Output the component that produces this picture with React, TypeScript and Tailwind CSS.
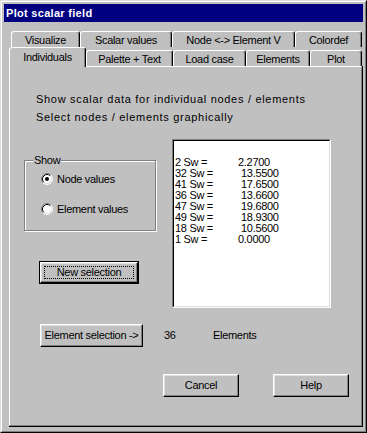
import React from "react";

const rows: [string, string][] = [
  ["2 Sw =", "2.2700"],
  ["32 Sw =", "13.5500"],
  ["41 Sw =", "17.6500"],
  ["36 Sw =", "13.6600"],
  ["47 Sw =", "19.6800"],
  ["49 Sw =", "18.9300"],
  ["18 Sw =", "10.5600"],
  ["1 Sw =", "0.0000"],
];

function Radio({ checked }: { checked?: boolean }) {
  return (
    <svg width="12" height="12" viewBox="0 0 12 12" className="shrink-0">
      <circle cx="6" cy="6" r="5" fill="#fff" />
      <path d="M2.11 9.89 A5.5 5.5 0 0 1 9.89 2.11" fill="none" stroke="#808080" />
      <path d="M9.89 2.11 A5.5 5.5 0 0 1 2.11 9.89" fill="none" stroke="#fff" />
      <path d="M2.82 9.18 A4.5 4.5 0 0 1 9.18 2.82" fill="none" stroke="#000" />
      <path d="M9.18 2.82 A4.5 4.5 0 0 1 2.82 9.18" fill="none" stroke="#dfdfdf" />
      {checked && <circle cx="6" cy="6" r="2" fill="#000" />}
    </svg>
  );
}

function Button({
  label,
  width,
  isDefault,
}: {
  label: string;
  width: string;
  isDefault?: boolean;
}) {
  if (isDefault) {
    return (
      <div className={`${width} h-[23px] border border-black`}>
        <div className="h-full border-t border-l border-white border-r border-b border-r-black border-b-black shadow-[inset_-1px_-1px_0_#808080,inset_1px_1px_0_#dfdfdf] flex items-center justify-center p-[3px]">
          <div className="w-full h-full border border-dotted border-black flex items-center justify-center">
            {label}
          </div>
        </div>
      </div>
    );
  }
  return (
    <div
      className={`${width} h-[23px] border-t border-l border-white border-r border-b border-r-black border-b-black shadow-[inset_-1px_-1px_0_#808080,inset_1px_1px_0_#dfdfdf] flex items-center justify-center`}
    >
      {label}
    </div>
  );
}

function Tab({ label, width, selected }: { label: string; width: string; selected?: boolean }) {
  return (
    <div
      className={`${width} ${
        selected ? "h-[20px] relative z-10 pb-[1px]" : "h-[16px] mt-[3px] pt-[2px]"
      } bg-[#c0c0c0] rounded-t-[3px] border-t border-l border-white border-r border-r-black shadow-[inset_-1px_0_0_#808080] flex items-center justify-center`}
    >
      {label}
    </div>
  );
}

function BackTab({ label, width }: { label: string; width: string }) {
  return (
    <div
      className={`${width} h-[18px] rounded-t-[3px] border-t border-l border-white border-r border-r-black shadow-[inset_-1px_0_0_#808080] flex items-start justify-center pt-[3px]`}
    >
      {label}
    </div>
  );
}

export default function App() {
  return (
    <div className="w-[367px] h-[433px] bg-[#c0c0c0] font-['Liberation_Sans',Arial,sans-serif] text-[11px] tracking-[-0.3px] text-black leading-none">
      <div className="w-full h-full border-t border-l border-[#dfdfdf] border-r border-b border-r-black border-b-black">
        <div className="w-full h-full border-t border-l border-white border-r border-b border-r-[#808080] border-b-[#808080] px-[2px] pt-[2px]">
          {/* Title bar */}
          <div className="h-[18px] bg-[#000080] text-white font-bold text-[11px] tracking-[0.3px] flex items-center pl-[2px]">
            Plot scalar field
          </div>

          {/* Tabs */}
          <div className="mt-[9px] ml-[5px]">
            <div className="flex h-[16px] ml-[2px] overflow-hidden items-start">
              <BackTab label="Visualize" width="w-[69px]" />
              <BackTab label="Scalar values" width="w-[92px]" />
              <BackTab label="Node <-> Element V" width="w-[123px]" />
              <BackTab label="Colordef" width="w-[67px]" />
            </div>
            <div className="flex h-[19px] items-start">
              <Tab label="Individuals" width="w-[77px]" selected />
              <Tab label="Palette + Text" width="w-[87px]" />
              <Tab label="Load case" width="w-[73px]" />
              <Tab label="Elements" width="w-[64px]" />
              <Tab label="Plot" width="w-[52px]" />
            </div>

            {/* Panel */}
            <div className="w-[354px] h-[361px] border-r border-b border-r-black border-b-black">
              <div className="w-full h-full border-t border-l border-white border-r border-b border-r-[#808080] border-b-[#808080]">
                <div className="pt-[23px] pl-[26px] leading-[18px] tracking-[0.7px]">
                  <div>Show scalar data for individual nodes / elements</div>
                  <div>Select nodes / elements graphically</div>
                </div>

                <div className="flex mt-[13px] ml-[14px]">
                  {/* Left column */}
                  <div className="w-[132px]">
                    <div className="relative mt-[21px] h-[71px] border border-[#808080] shadow-[inset_1px_1px_0_#fff,1px_1px_0_#fff]">
                      <span className="absolute -top-[6px] left-[8px] bg-[#c0c0c0] px-[1px]">Show</span>
                      <div className="flex items-center gap-[4px] ml-[16px] mt-[12px]">
                        <Radio checked />
                        <span>Node values</span>
                      </div>
                      <div className="flex items-center gap-[4px] ml-[16px] mt-[18px]">
                        <Radio />
                        <span>Element values</span>
                      </div>
                    </div>
                    <div className="mt-[30px] ml-[15px]">
                      <Button label="New selection" width="w-[100px]" isDefault />
                    </div>
                  </div>

                  {/* List box */}
                  <div className="ml-[16px] w-[159px] h-[169px] border-t border-l border-[#808080] border-r border-b border-r-white border-b-white">
                    <div className="w-full h-full bg-white border-t border-l border-black border-r border-b border-r-[#dfdfdf] border-b-[#dfdfdf] pt-[16px] pl-[1px] leading-[11px]">
                      {rows.map(([k, v]) => (
                        <div key={k} className="flex">
                          <span className="w-[63px]">{k}</span>
                          <span className={v.length > 6 ? "pl-[3px]" : ""}>{v}</span>
                        </div>
                      ))}
                    </div>
                  </div>
                </div>

                {/* Element selection row */}
                <div className="flex items-center mt-[16px] ml-[30px]">
                  <Button label="Element selection ->" width="w-[103px]" />
                  <span className="ml-[21px] w-[49px]">36</span>
                  <span>Elements</span>
                </div>

                {/* Cancel / Help */}
                <div className="flex mt-[27px] ml-[153px] gap-[34px]">
                  <Button label="Cancel" width="w-[76px]" />
                  <Button label="Help" width="w-[76px]" />
                </div>
              </div>
            </div>
          </div>
        </div>
      </div>
    </div>
  );
}
